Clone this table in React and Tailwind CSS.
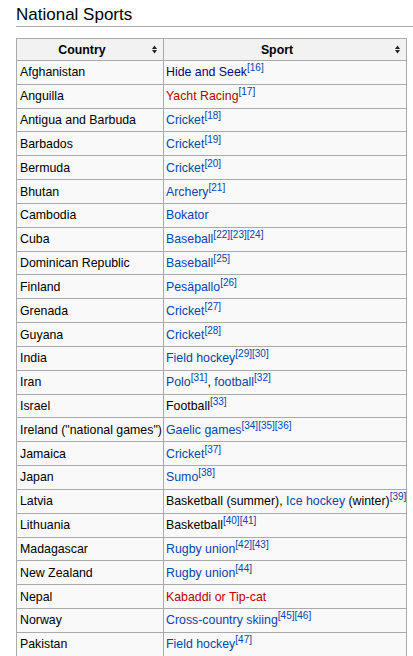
import React from "react";

const C = {
  b: "text-[#0645ad]",
  v: "text-[#0b0080]",
  r: "text-[#ba0000]",
  k: "text-black",
};

const rows = [
  ["Afghanistan", [["Hide and Seek", "v"], ["[16]", "s"]]],
  ["Anguilla", [["Yacht Racing", "r"], ["[17]", "s"]]],
  ["Antigua and Barbuda", [["Cricket", "b"], ["[18]", "s"]]],
  ["Barbados", [["Cricket", "b"], ["[19]", "s"]]],
  ["Bermuda", [["Cricket", "b"], ["[20]", "s"]]],
  ["Bhutan", [["Archery", "b"], ["[21]", "s"]]],
  ["Cambodia", [["Bokator", "b"]]],
  ["Cuba", [["Baseball", "b"], ["[22]", "s"], ["[23]", "s"], ["[24]", "s"]]],
  ["Dominican Republic", [["Baseball", "b"], ["[25]", "s"]]],
  ["Finland", [["Pesäpallo", "b"], ["[26]", "s"]]],
  ["Grenada", [["Cricket", "b"], ["[27]", "s"]]],
  ["Guyana", [["Cricket", "b"], ["[28]", "s"]]],
  ["India", [["Field hockey", "b"], ["[29]", "s"], ["[30]", "s"]]],
  ["Iran", [["Polo", "b"], ["[31]", "s"], [", ", "k"], ["football", "b"], ["[32]", "s"]]],
  ["Israel", [["Football", "k"], ["[33]", "s"]]],
  ['Ireland ("national games")', [["Gaelic games", "b"], ["[34]", "s"], ["[35]", "s"], ["[36]", "s"]]],
  ["Jamaica", [["Cricket", "b"], ["[37]", "s"]]],
  ["Japan", [["Sumo", "b"], ["[38]", "s"]]],
  ["Latvia", [["Basketball (summer), ", "k"], ["Ice hockey", "b"], [" (winter)", "k"], ["[39]", "s"]]],
  ["Lithuania", [["Basketball", "k"], ["[40]", "s"], ["[41]", "s"]]],
  ["Madagascar", [["Rugby union", "b"], ["[42]", "s"], ["[43]", "s"]]],
  ["New Zealand", [["Rugby union", "b"], ["[44]", "s"]]],
  ["Nepal", [["Kabaddi or Tip-cat", "r"]]],
  ["Norway", [["Cross-country skiing", "b"], ["[45]", "s"], ["[46]", "s"]]],
  ["Pakistan", [["Field hockey", "b"], ["[47]", "s"]]],
];

function SortIcon() {
  return (
    <svg width="5" height="9" viewBox="0 0 5 9" className="shrink-0 ml-[5px] mr-[6px]">
      <path d="M0 4 L2.5 0.5 L5 4 Z" fill="#222" />
      <path d="M0 5 L2.5 8.5 L5 5 Z" fill="#222" />
    </svg>
  );
}

export default function App() {
  return (
    <div
      className="bg-white text-black min-h-[656px]"
      style={{ fontFamily: '"Liberation Sans", Arial, Helvetica, sans-serif' }}
    >
      <div className="ml-[16px] pt-[5px] pb-[1px] border-b border-[#aaa] text-[17px] leading-[20px]">
        National Sports
      </div>
      <div className="ml-[16px] mt-[11px] w-[391px] border-l border-r border-t border-[#aaa] text-[12.35px] leading-[18px]">
        <div className="flex h-[22px] bg-[#f2f2f2] border-b border-[#aaa] font-bold">
          <div className="w-[147px] shrink-0 border-r border-[#aaa] flex items-center">
            <span className="flex-1 text-center">Country</span>
            <SortIcon />
          </div>
          <div className="flex-1 flex items-center">
            <span className="flex-1 text-center">Sport</span>
            <SortIcon />
          </div>
        </div>
        {rows.map(([country, segs]) => (
          <div
            key={country}
            className="flex h-[23.83px] bg-[#f9f9f9] border-b border-[#aaa]"
          >
            <div className="w-[147px] shrink-0 border-r border-[#aaa] flex items-center pl-[3px] whitespace-nowrap">
              {country}
            </div>
            <div className="flex-1 flex items-center pl-[2px] whitespace-nowrap">
              <span>
                {segs.map(([t, c], i) =>
                  c === "s" ? (
                    <sup key={i} className="text-[10px] text-[#0645ad]">
                      {t}
                    </sup>
                  ) : (
                    <span key={i} className={C[c]}>
                      {t}
                    </span>
                  )
                )}
              </span>
            </div>
          </div>
        ))}
      </div>
    </div>
  );
}
